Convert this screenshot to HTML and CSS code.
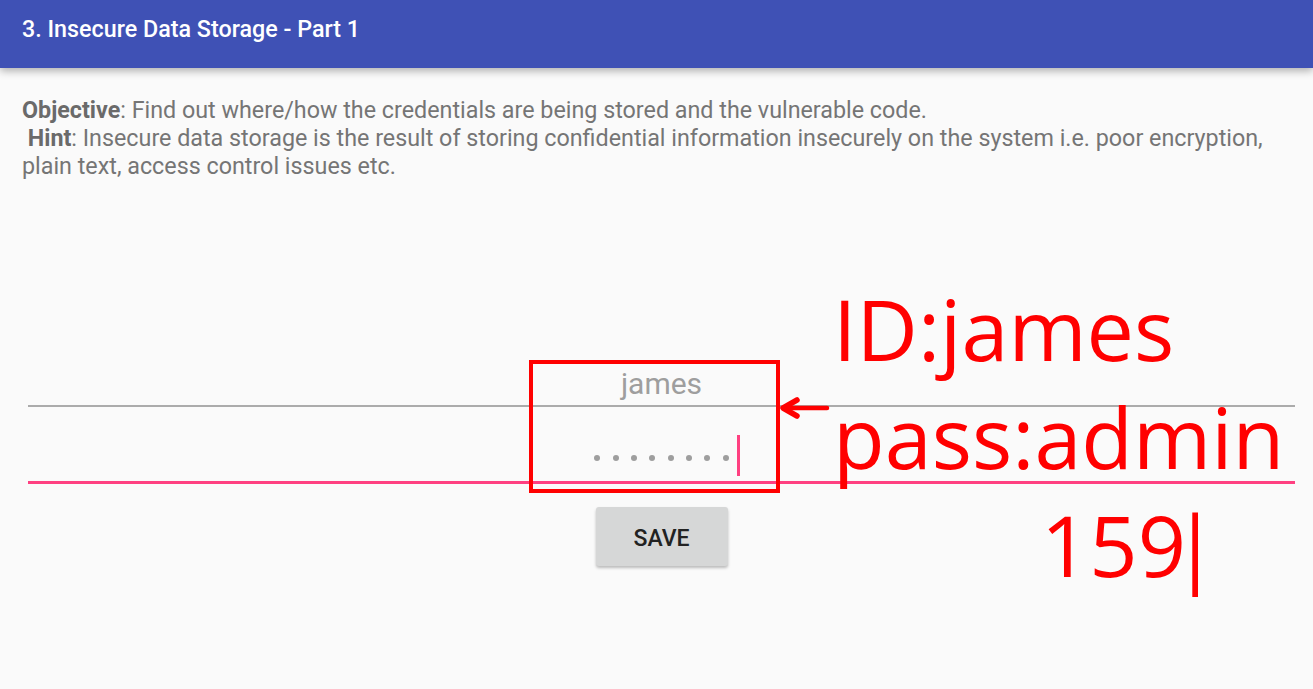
FILE: index.html
```html
<!DOCTYPE html>
<html lang="en">
<head>
  <meta charset="UTF-8" />
  <meta name="viewport" content="width=device-width, initial-scale=1" />
  <title>Insecure Data Storage - Part 1</title>
  <link rel="stylesheet" href="styles.css">
</head>
<body>
  <header class="toolbar">
    <h1>3. Insecure Data Storage - Part 1</h1>
  </header>

  <main class="content">
    <p class="desc">
      <b>Objective</b>: Find out where/how the credentials are being stored and the vulnerable code.<br>
      &nbsp;<b>Hint</b>: Insecure data storage is the result of storing confidential information insecurely on the system i.e. poor encryption, plain text, access control issues etc.
    </p>

    <form class="creds" onsubmit="return false">
      <div class="field">
        <span class="value">james</span>
      </div>
      <div class="field active">
        <span class="dots">
          <i></i><i></i><i></i><i></i><i></i><i></i><i></i><i></i>
        </span>
        <span class="caret"></span>
      </div>
      <button class="save" type="button">SAVE</button>
    </form>
  </main>

  <!-- annotation drawn over the screenshot -->
  <div class="markup">
    <div class="mark-box"></div>
    <svg class="mark-arrow" width="50" height="24" viewBox="0 0 50 24">
      <path d="M47 12 H4" fill="none" stroke="#ff0000" stroke-width="4.5" stroke-linecap="round"/>
      <path d="M17 4 L3 12 L17 20" fill="none" stroke="#ff0000" stroke-width="5.5" stroke-linecap="round" stroke-linejoin="round"/>
    </svg>
    <div class="mark-note">ID:james<br>pass:admin<br><span class="indent">159<span class="bar">|</span></span></div>
  </div>
</body>
</html>
```

FILE: styles.css
```css
body {
  margin: 0;
  background: #fafafa;
  font-family: Roboto, "Liberation Sans", sans-serif;
  position: relative;
  min-height: 689px;
  overflow: hidden;
}
.toolbar {
  height: 68px;
  background: #3f51b5;
  display: flex;
  align-items: center;
  padding: 0 22px;
  box-shadow: 0 3px 8px rgba(0,0,0,0.3);
  position: relative;
  z-index: 2;
}
.toolbar h1 {
  margin: -10px 0 0;
  color: #fff;
  font-size: 23.3px;
  font-weight: 500;
}
.content {
  padding: 0 18px 0 22px;
}
.desc {
  margin: 28px 0 0;
  font-size: 23.3px;
  line-height: 28px;
  color: #757575;
}
.desc b {
  font-weight: 700;
  color: #6a6a6a;
}
.creds {
  margin: 150px 0 0 6px;
  display: flex;
  flex-direction: column;
}
.field {
  height: 77px;
  box-sizing: border-box;
  border-bottom: 2px solid #ababab;
  padding-bottom: 5px;
  display: flex;
  justify-content: center;
  align-items: flex-end;
}
.field.active {
  border-bottom: 3px solid #ff4081;
  padding-left: 11px;
}
.value {
  font-size: 30px;
  line-height: 32px;
  color: #9e9e9e;
}
.dots {
  display: flex;
  gap: 12.4px;
  margin-bottom: 15px;
}
.dots i {
  width: 6px;
  height: 6px;
  border-radius: 50%;
  background: #9e9e9e;
}
.caret {
  width: 3px;
  height: 41px;
  margin-left: 8px;
  background: #ff4081;
}
.save {
  align-self: center;
  margin-top: 23px;
  width: 132px;
  height: 59px;
  border: none;
  border-radius: 3px;
  background: #d6d7d7;
  box-shadow: 0 2px 3px rgba(0,0,0,0.25);
  font-family: Roboto, "Liberation Sans", sans-serif;
  font-size: 23px;
  font-weight: 500;
  color: #222;
  padding-top: 4px;
}

/* red annotation layer */
.mark-box {
  position: absolute;
  left: 529px;
  top: 360px;
  width: 251px;
  height: 133px;
  box-sizing: border-box;
  border: 4px solid #ff0000;
}
.mark-arrow {
  position: absolute;
  left: 780px;
  top: 396px;
}
.mark-note {
  position: absolute;
  left: 833px;
  top: 275px;
  font-family: "Open Sans", "Noto Sans", sans-serif;
  font-size: 84.5px;
  line-height: 108px;
  color: #ff0000;
  white-space: nowrap;
}
.mark-note .indent {
  padding-left: 208px;
}
.mark-note .bar {
  margin-left: -14px;
}
```
